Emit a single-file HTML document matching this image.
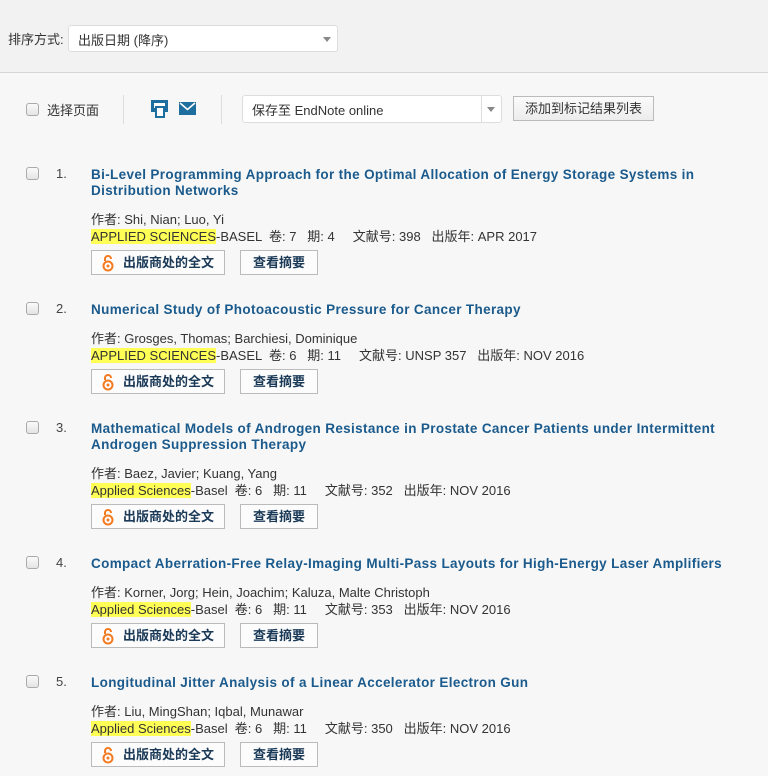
<!DOCTYPE html>
<html><head><meta charset="utf-8"><style>
*{margin:0;padding:0;box-sizing:border-box}
body{width:768px;height:776px;overflow:hidden;background:#f7f7f7;font-family:"Liberation Sans","Noto Sans CJK SC",sans-serif;font-size:13px;color:#333;position:relative}
.top{position:absolute;left:0;top:0;width:768px;height:73px;background:#f2f2f2;border-bottom:1px solid #d6d6d6}
.abs{position:absolute}
.sel{background:#fff;border:1px solid #ddd;border-radius:3px}
.arrow{width:0;height:0;border-left:4px solid transparent;border-right:4px solid transparent;border-top:5px solid #888;position:absolute}
.cb{position:absolute;width:13px;height:13px;border:1px solid #aaa;border-radius:3px;background:linear-gradient(#fafafa,#e4e4e4)}
.sep{position:absolute;width:1px;background:#ddd}
.title{position:absolute;left:91px;width:650px;font-weight:bold;color:#1a5a8c;line-height:16px;font-size:13.5px;letter-spacing:0.35px}
.num{position:absolute;left:56px;color:#444}
.line{position:absolute;left:91px;line-height:17px;white-space:pre}
.hl{background:#ffff55}
.btn{position:absolute;height:25px;border:1px solid #bbb;background:#fcfcfc;font-weight:bold;color:#1b3a58;line-height:23px;font-size:13px}
</style></head><body>
<div class="top"></div>
<div class="abs" style="left:8px;top:29px">排序方式:</div>
<div class="abs sel" style="left:68px;top:25px;width:270px;height:27px"><span class="abs" style="left:9px;top:4px">出版日期 (降序)</span><div class="arrow" style="left:254px;top:11px"></div></div>

<div class="cb" style="left:26px;top:103px"></div>
<div class="abs" style="left:47px;top:100px">选择页面</div>
<div class="sep" style="left:123px;top:95px;height:29px"></div>
<svg class="abs" style="left:151px;top:100px" width="17" height="18" viewBox="0 0 17 18"><rect x="0" y="0" width="17" height="12" fill="#1f6ea0"/><rect x="3" y="3" width="11" height="5" fill="#fff"/><rect x="4" y="6" width="10" height="12" fill="#1f6ea0"/><rect x="6" y="8" width="6" height="8" fill="#fff"/></svg>
<svg class="abs" style="left:179px;top:102px" width="17" height="13" viewBox="0 0 17 13"><rect width="17" height="13" fill="#1f6ea0"/><path d="M1 1 L8.5 7.5 L16 1" stroke="#fff" stroke-width="1.6" fill="none"/></svg>
<div class="sep" style="left:221px;top:95px;height:29px"></div>
<div class="abs sel" style="left:242px;top:95px;width:260px;height:28px"><span class="abs" style="left:9px;top:4px">保存至 EndNote online</span><div class="abs" style="left:238px;top:0;width:1px;height:26px;background:#ddd"></div><div class="arrow" style="left:244px;top:11px"></div></div>
<div class="abs" style="left:513px;top:96px;width:141px;height:25px;border:1px solid #bbb;background:linear-gradient(#fbfbfb,#ececec);text-align:center;line-height:23px">添加到标记结果列表</div>

<!-- item 1 -->
<div class="cb" style="left:26px;top:167px"></div><div class="num" style="top:166px">1.</div>
<div class="title" style="top:167px">Bi-Level Programming Approach for the Optimal Allocation of Energy Storage Systems in Distribution Networks</div>
<div class="line" style="top:211px">作者: Shi, Nian; Luo, Yi</div>
<div class="line" style="top:228px"><span class="hl">APPLIED SCIENCES</span>-BASEL  卷: 7   期: 4     文献号: 398   出版年: APR 2017</div>
<div class="btn" style="left:91px;top:250px;width:134px"><svg style="position:absolute;left:10px;top:4px" width="12" height="17" viewBox="0 0 12 17"><path d="M3 6 V4 A3 3 0 0 1 9 4" stroke="#f47a20" stroke-width="2" fill="none"/><circle cx="6" cy="11" r="4.5" stroke="#f47a20" stroke-width="2" fill="none"/><circle cx="6" cy="11" r="1.5" fill="#f47a20"/></svg><span style="position:absolute;left:31px">出版商处的全文</span></div>
<div class="btn" style="left:240px;top:250px;width:78px;text-align:center">查看摘要</div>

<!-- item 2 -->
<div class="cb" style="left:26px;top:302px"></div><div class="num" style="top:301px">2.</div>
<div class="title" style="top:302px">Numerical Study of Photoacoustic Pressure for Cancer Therapy</div>
<div class="line" style="top:330px">作者: Grosges, Thomas; Barchiesi, Dominique</div>
<div class="line" style="top:347px"><span class="hl">APPLIED SCIENCES</span>-BASEL  卷: 6   期: 11     文献号: UNSP 357   出版年: NOV 2016</div>
<div class="btn" style="left:91px;top:369px;width:134px"><svg style="position:absolute;left:10px;top:4px" width="12" height="17" viewBox="0 0 12 17"><path d="M3 6 V4 A3 3 0 0 1 9 4" stroke="#f47a20" stroke-width="2" fill="none"/><circle cx="6" cy="11" r="4.5" stroke="#f47a20" stroke-width="2" fill="none"/><circle cx="6" cy="11" r="1.5" fill="#f47a20"/></svg><span style="position:absolute;left:31px">出版商处的全文</span></div>
<div class="btn" style="left:240px;top:369px;width:78px;text-align:center">查看摘要</div>

<!-- item 3 -->
<div class="cb" style="left:26px;top:421px"></div><div class="num" style="top:420px">3.</div>
<div class="title" style="top:421px">Mathematical Models of Androgen Resistance in Prostate Cancer Patients under Intermittent Androgen Suppression Therapy</div>
<div class="line" style="top:465px">作者: Baez, Javier; Kuang, Yang</div>
<div class="line" style="top:482px"><span class="hl">Applied Sciences</span>-Basel  卷: 6   期: 11     文献号: 352   出版年: NOV 2016</div>
<div class="btn" style="left:91px;top:504px;width:134px"><svg style="position:absolute;left:10px;top:4px" width="12" height="17" viewBox="0 0 12 17"><path d="M3 6 V4 A3 3 0 0 1 9 4" stroke="#f47a20" stroke-width="2" fill="none"/><circle cx="6" cy="11" r="4.5" stroke="#f47a20" stroke-width="2" fill="none"/><circle cx="6" cy="11" r="1.5" fill="#f47a20"/></svg><span style="position:absolute;left:31px">出版商处的全文</span></div>
<div class="btn" style="left:240px;top:504px;width:78px;text-align:center">查看摘要</div>

<!-- item 4 -->
<div class="cb" style="left:26px;top:556px"></div><div class="num" style="top:555px">4.</div>
<div class="title" style="top:556px">Compact Aberration-Free Relay-Imaging Multi-Pass Layouts for High-Energy Laser Amplifiers</div>
<div class="line" style="top:584px">作者: Korner, Jorg; Hein, Joachim; Kaluza, Malte Christoph</div>
<div class="line" style="top:601px"><span class="hl">Applied Sciences</span>-Basel  卷: 6   期: 11     文献号: 353   出版年: NOV 2016</div>
<div class="btn" style="left:91px;top:623px;width:134px"><svg style="position:absolute;left:10px;top:4px" width="12" height="17" viewBox="0 0 12 17"><path d="M3 6 V4 A3 3 0 0 1 9 4" stroke="#f47a20" stroke-width="2" fill="none"/><circle cx="6" cy="11" r="4.5" stroke="#f47a20" stroke-width="2" fill="none"/><circle cx="6" cy="11" r="1.5" fill="#f47a20"/></svg><span style="position:absolute;left:31px">出版商处的全文</span></div>
<div class="btn" style="left:240px;top:623px;width:78px;text-align:center">查看摘要</div>

<!-- item 5 -->
<div class="cb" style="left:26px;top:675px"></div><div class="num" style="top:674px">5.</div>
<div class="title" style="top:675px">Longitudinal Jitter Analysis of a Linear Accelerator Electron Gun</div>
<div class="line" style="top:703px">作者: Liu, MingShan; Iqbal, Munawar</div>
<div class="line" style="top:720px"><span class="hl">Applied Sciences</span>-Basel  卷: 6   期: 11     文献号: 350   出版年: NOV 2016</div>
<div class="btn" style="left:91px;top:742px;width:134px"><svg style="position:absolute;left:10px;top:4px" width="12" height="17" viewBox="0 0 12 17"><path d="M3 6 V4 A3 3 0 0 1 9 4" stroke="#f47a20" stroke-width="2" fill="none"/><circle cx="6" cy="11" r="4.5" stroke="#f47a20" stroke-width="2" fill="none"/><circle cx="6" cy="11" r="1.5" fill="#f47a20"/></svg><span style="position:absolute;left:31px">出版商处的全文</span></div>
<div class="btn" style="left:240px;top:742px;width:78px;text-align:center">查看摘要</div>
</body></html>
